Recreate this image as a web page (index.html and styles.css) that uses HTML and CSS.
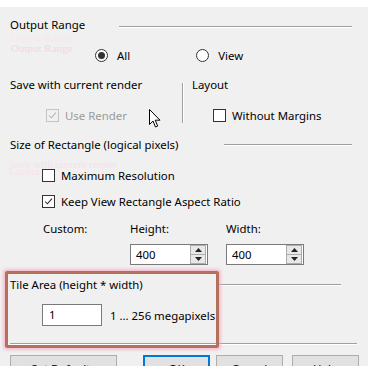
FILE: index.html
```html
<!DOCTYPE html>
<html>
<head>
<meta charset="utf-8">
<link rel="stylesheet" href="styles.css">
</head>
<body>
<div class="dialog">
  <div class="strip"></div>

  <div class="row head1">
    <span class="lbl">Output Range</span>
    <span class="hline hl1"></span>
  </div>

  <div class="row radios">
    <span class="radio on"></span><span class="rtext">All</span>
    <span class="radio view"></span><span class="rtext">View</span>
  </div>

  <div class="twocol">
    <div class="col left">
      <div class="row sub"><span class="lbl">Save with current render</span></div>
      <div class="row chkrow userender">
        <span class="chk disabled"><svg viewBox="0 0 13 13"><polyline points="2.5,6.5 5.2,9.3 10.5,3.2" fill="none" stroke="#b4b4b4" stroke-width="1.2"/></svg></span>
        <span class="ctext dis">Use Render</span>
      </div>
    </div>
    <div class="vsep"></div>
    <div class="col right">
      <div class="row sub"><span class="lbl layout">Layout</span></div>
      <div class="row chkrow margins">
        <span class="chk"></span>
        <span class="ctext">Without Margins</span>
      </div>
    </div>
  </div>

  <div class="row head2">
    <span class="lbl">Size of Rectangle (logical pixels)</span>
    <span class="hline hl2"></span>
  </div>

  <div class="row chkrow maxres">
    <span class="chk"></span>
    <span class="ctext">Maximum Resolution</span>
  </div>
  <div class="row chkrow keep">
    <span class="chk"><svg viewBox="0 0 13 13"><polyline points="2.5,6.5 5.2,9.3 10.5,3.2" fill="none" stroke="#222" stroke-width="1.2"/></svg></span>
    <span class="ctext">Keep View Rectangle Aspect Ratio</span>
  </div>

  <div class="row labels">
    <span class="lbl custom">Custom:</span>
    <span class="lbl hgt">Height:</span>
    <span class="lbl wdt">Width:</span>
  </div>

  <div class="row spins">
    <div class="spin sp1">
      <span class="val">400</span>
      <div class="btns">
        <span class="sb"><svg viewBox="0 0 7 4"><polygon points="0,4 3.5,0 7,4" fill="#222"/></svg></span>
        <span class="sb"><svg viewBox="0 0 7 4"><polygon points="0,0 3.5,4 7,0" fill="#222"/></svg></span>
      </div>
    </div>
    <div class="spin sp2">
      <span class="val">400</span>
      <div class="btns">
        <span class="sb"><svg viewBox="0 0 7 4"><polygon points="0,4 3.5,0 7,4" fill="#222"/></svg></span>
        <span class="sb"><svg viewBox="0 0 7 4"><polygon points="0,0 3.5,4 7,0" fill="#222"/></svg></span>
      </div>
    </div>
  </div>

  <div class="row head3">
    <span class="lbl">Tile Area (height * width)</span>
    <span class="hline hl3"></span>
  </div>

  <div class="row tile">
    <div class="edit"><span class="val">1</span></div>
    <span class="ctext range">1 ... 256 megapixels</span>
  </div>

  <div class="row bottomline"><span class="hline hl4"></span></div>

  <div class="row buttons">
    <span class="btn b1">Set Defaults</span>
    <span class="btn b2 def">OK</span>
    <span class="btn b3">Cancel</span>
    <span class="btn b4">Help</span>
  </div>

  <div class="ghost g0">Output Range</div>
  <div class="ghost g1">Output Range</div>
  <div class="ghost g2">Save with current render</div>
  <div class="ghost g3">Layout</div>

  <div class="highlight"></div>

  <svg class="cursor" viewBox="0 0 12 19" width="12" height="19"><path d="M0.5,0.5 L0.5,15.5 L4,12 L6.5,18 L8.7,17 L6.2,11.2 L11,11.2 Z" fill="#fff" stroke="#000" stroke-width="1" stroke-linejoin="round"/></svg>
</div>
</body>
</html>
```

FILE: styles.css
```css
* { box-sizing: border-box; }
html, body { margin: 0; padding: 0; }
body {
  width: 368px;
  height: 366px;
  overflow: hidden;
  background: #f0f0f0;
  font-family: "Segoe UI", "Noto Sans", "Liberation Sans", sans-serif;
  font-size: 11.4px;
  color: #000;
}
.dialog {
  position: relative;
  width: 368px;
  height: 366px;
  display: flex;
  flex-direction: column;
}
.strip { height: 7px; background: #fff; flex: none; }
.row {
  display: flex;
  align-items: center;
  flex: none;
  white-space: nowrap;
}
.lbl { line-height: 16px; }

.hline {
  display: block;
  height: 2px;
  border-top: 1px solid #a0a0a0;
  border-bottom: 1px solid #fff;
}
.head1 { margin-top: 10px; height: 16px; padding-left: 10px; }
.hl1 { margin-left: auto; width: 233px; margin-right: 16px; margin-top: 4px; }

.radios { margin-top: 14px; height: 16px; }
.radio {
  width: 13px; height: 13px;
  border: 1px solid #333;
  border-radius: 50%;
  background: #fff;
  position: relative;
  flex: none;
}
.radio.on { margin-left: 95px; }
.radio.on::after {
  content: "";
  position: absolute;
  left: 2px; top: 2px;
  width: 7px; height: 7px;
  border-radius: 50%;
  background: #333;
}
.radio.view { margin-left: 66px; }
.rtext { margin-left: 9px; }

.twocol { display: flex; margin-top: 14px; height: 48px; flex: none; }
.col { display: flex; flex-direction: column; }
.left { width: 182px; padding-left: 10px; }
.right { padding-left: 8px; }
.sub { height: 16px; }
.chkrow { height: 16px; }
.userender { margin-top: 14px; padding-left: 36px; }
.margins { margin-top: 14px; padding-left: 21px; }
.vsep {
  width: 2px;
  margin-top: 6px;
  height: 40px;
  border-left: 1px solid #a0a0a0;
  border-right: 1px solid #fff;
  flex: none;
}

.chk {
  width: 13px; height: 13px;
  border: 1px solid #333;
  background: #fff;
  flex: none;
  display: flex;
}
.chk svg { width: 11px; height: 11px; }
.chk.disabled { border-color: #c4c4c4; background: #f0f0f0; }
.ctext { margin-left: 6px; }
.ctext.dis { color: #9a9a9a; }

.head2 { margin-top: 12px; height: 16px; padding-left: 10px; }
.hl2 { margin-left: auto; width: 128px; margin-right: 16px; }

.maxres { margin-top: 14px; padding-left: 42px; }
.keep { margin-top: 10px; padding-left: 42px; }

.labels { margin-top: 12px; height: 16px; }
.custom { margin-left: 43px; width: 87px; }
.hgt { width: 96px; }

.spins { margin-top: 7px; height: 21px; }
.spin {
  width: 78px; height: 21px;
  border: 1px solid #7a7a7a;
  background: #fff;
  display: flex;
  align-items: center;
  padding-left: 5px;
}
.sp1 { margin-left: 130px; }
.sp2 { margin-left: 18px; }
.val { flex: 1; line-height: 16px; }
.btns { display: flex; flex-direction: column; width: 16px; height: 19px; margin-right: 1px; }
.sb {
  flex: 1;
  border: 1px solid #adadad;
  background: #e8e8e8;
  display: flex;
  align-items: center;
  justify-content: center;
}
.sb + .sb { border-top: none; }
.sb svg { width: 7px; height: 4px; }

.head3 { margin-top: 12px; height: 16px; padding-left: 10px; }
.hl3 { margin-left: auto; width: 125px; margin-right: 27px; }

.tile { margin-top: 11px; height: 22px; padding-left: 42px; }
.edit {
  width: 60px; height: 22px;
  border: 1px solid #7a7a7a;
  background: #fff;
  display: flex;
  align-items: center;
  padding-left: 6px;
}
.range { margin-left: 8px; }

.bottomline { margin-top: 17px; height: 2px; padding-left: 10px; }
.hl4 { width: 347px; }

.buttons { margin-top: 10px; height: 23px; }
.btn {
  height: 23px;
  border: 1px solid #adadad;
  background: #e1e1e1;
  display: flex;
  align-items: center;
  justify-content: center;
  padding-top: 3px;
}
.b1 { margin-left: 10px; width: 107px; }
.b2 { margin-left: 26px; width: 67px; }
.b3 { margin-left: 6px; width: 67px; }
.b4 { margin-left: 9px; width: 67px; }
.def { border: 2px solid #0078d7; }

.ghost {
  position: absolute;
  font-family: "Liberation Serif", serif;
  font-size: 11px;
  color: #f7d6e5;
  white-space: nowrap;
}
.g0 { left: 11px; top: 32px; color: #fae6ef; }
.g1 { left: 11px; top: 42px; }
.g2 { left: 9px; top: 158px; color: #f9e0eb; }
.g3 { left: 9px; top: 165px; color: #f9e0eb; }

.highlight {
  position: absolute;
  left: 5px;
  top: 271px;
  width: 214px;
  height: 77px;
  border: 3px solid #b5705c;
  border-radius: 2px;
  box-shadow: 0 0 3px 2px rgba(246, 170, 195, 0.7);
}

.cursor {
  position: absolute;
  left: 149px;
  top: 109px;
}
```
